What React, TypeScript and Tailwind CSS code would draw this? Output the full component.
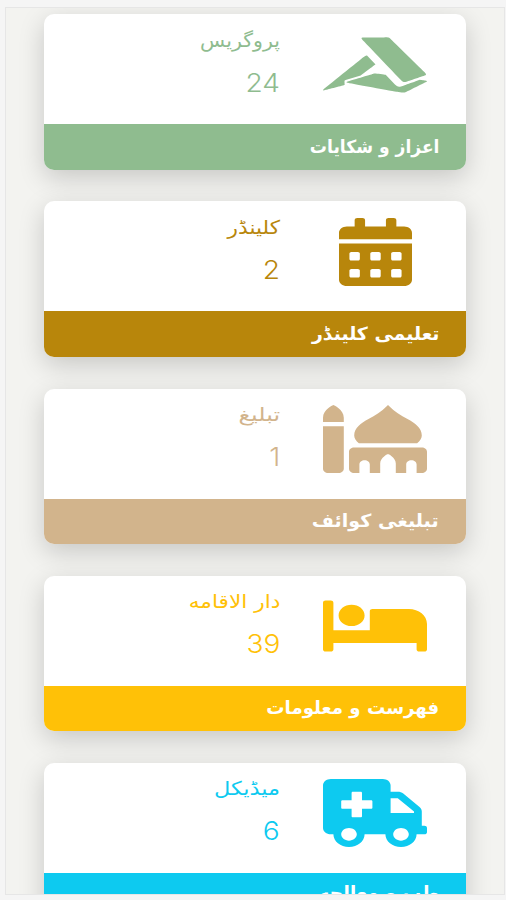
import type { IconType } from 'react-icons'
import { FaAccusoft, FaAmbulance, FaBed, FaCalendarAlt, FaMosque } from 'react-icons/fa'

type Card = {
  title: string
  count: number
  footer: string
  icon: IconType
  iconClass: string
  textClass: string
  bgClass: string
  titleClass: string
  footerClass: string
}

const cards: Card[] = [
  {
    title: 'پروگریس',
    count: 24,
    footer: 'اعزاز و شکایات',
    icon: FaAccusoft,
    iconClass: 'w-[104px]',
    textClass: 'text-[#8fbc8f]',
    bgClass: 'bg-[#8fbc8f]',
    titleClass: 'scale-x-[1.08]',
    footerClass: 'scale-x-[0.95]',
  },
  {
    title: 'کلینڈر',
    count: 2,
    footer: 'تعلیمی کلینڈر',
    icon: FaCalendarAlt,
    iconClass: 'w-[73px]',
    textClass: 'text-[#b8860b]',
    bgClass: 'bg-[#b8860b]',
    titleClass: 'scale-x-[1.14]',
    footerClass: 'scale-x-[1.05]',
  },
  {
    title: 'تبلیغ',
    count: 1,
    footer: 'تبلیغی کوائف',
    icon: FaMosque,
    iconClass: 'w-[104px]',
    textClass: 'text-[#d2b48c]',
    bgClass: 'bg-[#d2b48c]',
    titleClass: 'scale-x-[1.26]',
    footerClass: 'scale-x-[1.06]',
  },
  {
    title: 'دار الاقامه',
    count: 39,
    footer: 'فهرست و معلومات',
    icon: FaBed,
    iconClass: 'w-[104px]',
    textClass: 'text-[#ffc107]',
    bgClass: 'bg-[#ffc107]',
    titleClass: 'scale-x-[1.14]',
    footerClass: 'scale-x-[1.01]',
  },
  {
    title: 'میڈیکل',
    count: 6,
    footer: 'طب و معالجه',
    icon: FaAmbulance,
    iconClass: 'w-[104px]',
    textClass: 'text-[#0dcaf0]',
    bgClass: 'bg-[#0dcaf0]',
    titleClass: 'scale-x-[1.18]',
    footerClass: 'scale-x-[1.02] pb-[5px]',
  },
]

function StatCard({ card }: { card: Card }) {
  const Icon = card.icon
  return (
    <div className="h-[155.5px] shrink-0 overflow-hidden rounded-[10px] bg-white shadow-[0_8px_26px_rgba(0,0,0,0.18)]">
      <div className={`flex h-[110px] pr-[39px] pt-[16.3px] ${card.textClass}`}>
        <div className="flex w-[104px] justify-center">
          <Icon preserveAspectRatio="none" className={`h-[68px] ${card.iconClass}`} />
        </div>
        <div className="mr-[43px] flex flex-col items-start">
          <div className={`-mt-[2px] h-[22px] origin-right whitespace-nowrap text-[19px] leading-[22px] ${card.titleClass}`}>
            {card.title}
          </div>
          <div className="mt-[16px] origin-right scale-x-[1.08] font-[Inter] text-[26px] font-light leading-[32px]">
            {card.count}
          </div>
        </div>
      </div>
      <div className={`flex h-[45.5px] items-center pr-[27px] text-white ${card.bgClass}`}>
        <div className={`origin-right whitespace-nowrap text-[18px] font-bold leading-[24px] ${card.footerClass}`}>
          {card.footer}
        </div>
      </div>
    </div>
  )
}

export default function App() {
  return (
    <div className="h-[900px] overflow-hidden bg-[#f5f5f5] pl-[5px] pt-[7px]">
      <div
        dir="rtl"
        className="flex h-[888px] w-[500px] flex-col gap-[31.6px] overflow-hidden border border-[#e6e6e6] bg-[#f3f3f0] pl-[38px] pr-[38px] pt-[6.4px] font-['DejaVu_Sans',sans-serif]"
      >
        {cards.map((card) => (
          <StatCard key={card.footer} card={card} />
        ))}
      </div>
    </div>
  )
}
